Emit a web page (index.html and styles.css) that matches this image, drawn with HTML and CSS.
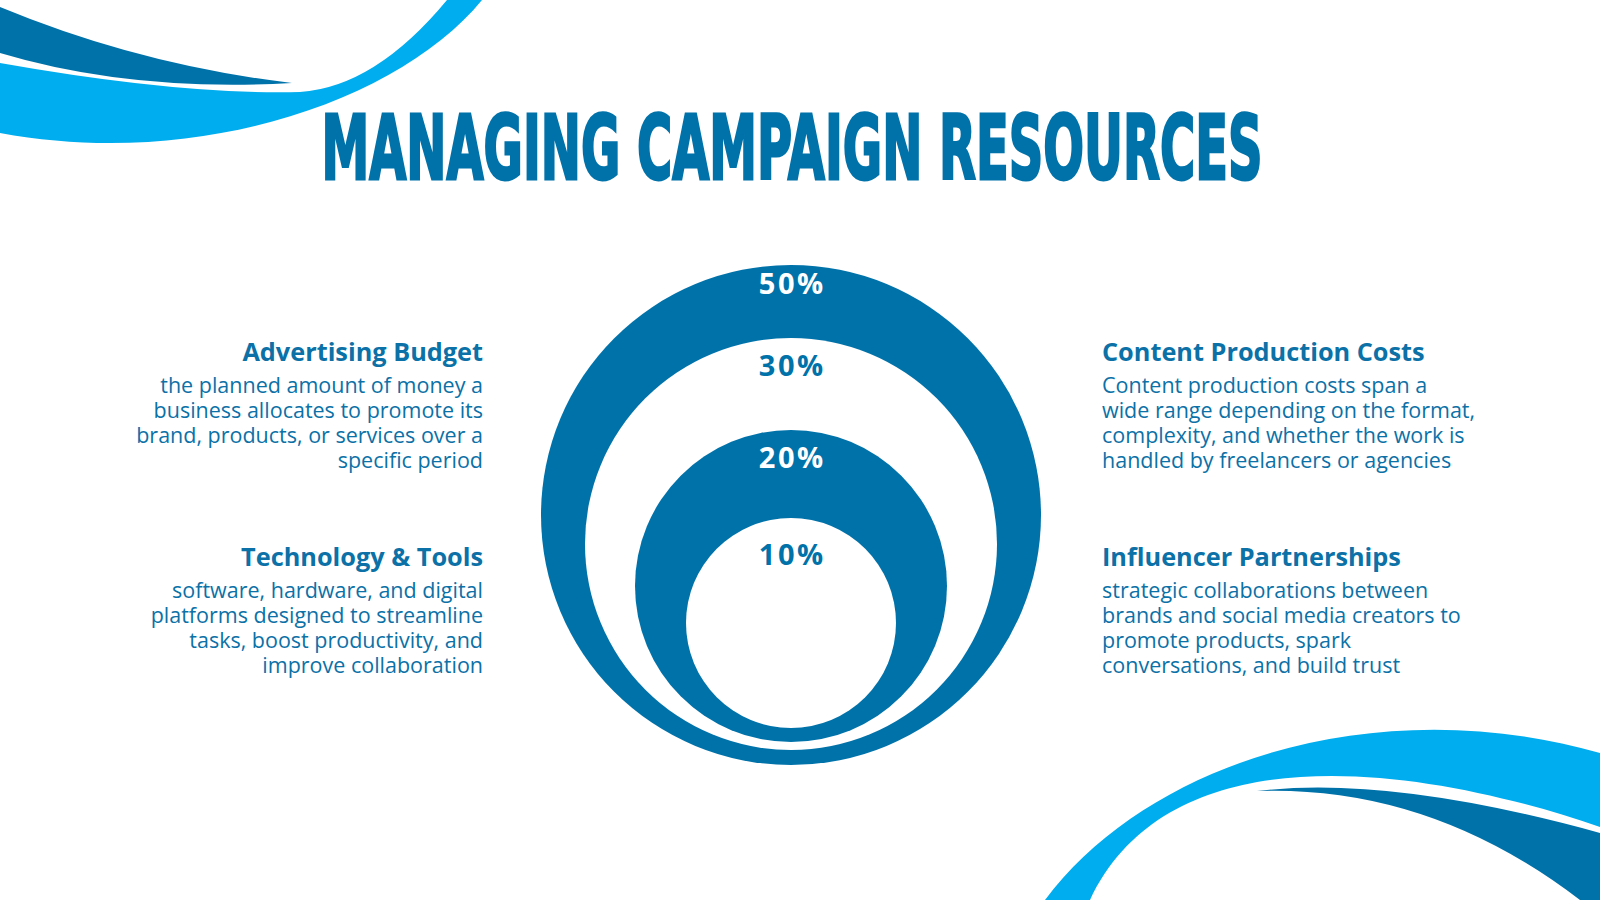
FILE: index.html
```html
<!DOCTYPE html>
<html lang="en">
<head>
<meta charset="utf-8">
<title>Managing Campaign Resources</title>
<link rel="stylesheet" href="styles.css">
</head>
<body>
<div class="slide">
  <svg class="decor" viewBox="0 0 1600 900" xmlns="http://www.w3.org/2000/svg" aria-hidden="true">
    <path class="swoosh-dark" d="M0,7 Q140,65 292,83 Q130,92 0,53 Z"/>
    <path class="swoosh-light" d="M0,63 Q180,95 300,92 Q375,87 447,0 L482,0 C400,100 200,170 0,133 Z"/>
    <path class="swoosh-light" d="M1045,900 C1150,760 1380,690 1600,753 L1600,827 C1420,765 1170,730 1090,900 Z"/>
    <path class="swoosh-dark" d="M1257,791 Q1390,775 1600,833 L1600,900 L1580,900 Q1430,785 1257,791 Z"/>
  </svg>

  <h1 class="title"><span>MANAGING CAMPAIGN RESOURCES</span></h1>

  <main class="content">
    <section class="col col-left">
      <div class="item">
        <h2>Advertising Budget</h2>
        <p>the planned amount of money a<br>business allocates to promote its<br>brand, products, or services over a<br>specific period</p>
      </div>
      <div class="item">
        <h2>Technology &amp; Tools</h2>
        <p>software, hardware, and digital<br>platforms designed to streamline<br>tasks, boost productivity, and<br>improve collaboration</p>
      </div>
    </section>

    <div class="chart">
      <div class="ring ring-1">
        <span class="pct pct-light">50%</span>
        <div class="ring ring-2">
          <span class="pct">30%</span>
          <div class="ring ring-3">
            <span class="pct pct-light">20%</span>
            <div class="ring ring-4">
              <span class="pct">10%</span>
            </div>
          </div>
        </div>
      </div>
    </div>

    <section class="col col-right">
      <div class="item">
        <h2>Content Production Costs</h2>
        <p>Content production costs span a<br>wide range depending on the format,<br>complexity, and whether the work is<br>handled by freelancers or agencies</p>
      </div>
      <div class="item">
        <h2>Influencer Partnerships</h2>
        <p>strategic collaborations between<br>brands and social media creators to<br>promote products, spark<br>conversations, and build trust</p>
      </div>
    </section>
  </main>
</div>
</body>
</html>
```

FILE: styles.css
```css
html, body {
  margin: 0;
  padding: 0;
  background: #ffffff;
}

.slide {
  position: relative;
  width: 1600px;
  height: 900px;
  overflow: hidden;
  background: #ffffff;
  font-family: "Open Sans", "Noto Sans", sans-serif;
  color: #0b71a7;
}

.decor {
  position: absolute;
  left: 0;
  top: 0;
  width: 1600px;
  height: 900px;
  z-index: 0;
}

.swoosh-dark { fill: #0072aa; }
.swoosh-light { fill: #00adee; }

.title,
.content {
  position: relative;
  z-index: 1;
}

.title {
  display: flex;
  justify-content: center;
  margin: 107.5px 0 0;
  padding-right: 17px;
  font-family: "DejaVu Sans", sans-serif;
  font-weight: 700;
  font-size: 89px;
  line-height: 80px;
  color: #0072aa;
}

.title span {
  display: inline-block;
  flex: none;
  white-space: nowrap;
  transform: scaleX(0.539);
  transform-origin: center;
  -webkit-text-stroke: 3px #0072aa;
}

.content {
  display: grid;
  grid-template-columns: 483px 500px 1fr;
  column-gap: 58px;
  align-items: start;
  margin-top: 77.5px;
}

.col {
  padding-top: 71px;
}

.col-left { text-align: right; }
.col-right { text-align: left; padding-left: 3px; }

.item + .item { margin-top: 69px; }

.item h2 {
  margin: 0 0 6px;
  font-size: 25.3px;
  line-height: 30px;
  font-weight: 700;
}

.item p {
  margin: 0;
  font-size: 21.5px;
  line-height: 25px;
  font-weight: 400;
}

.ring {
  box-sizing: border-box;
  border-radius: 50%;
  display: flex;
  flex-direction: column;
  align-items: center;
}

.ring > .ring { margin-top: auto; }

.ring-1 {
  width: 500px;
  height: 500px;
  padding: 3px 0 15px;
  background: #0072aa;
}

.ring-2 {
  width: 412px;
  height: 412px;
  padding: 12px 0 8px;
  background: #ffffff;
}

.ring-3 {
  width: 312px;
  height: 312px;
  padding: 12px 0 14px;
  background: #0072aa;
}

.ring-4 {
  width: 210px;
  height: 210px;
  padding: 21px 0 0;
  background: #ffffff;
}

.pct {
  display: block;
  padding-left: 2.5px;
  font-family: "Open Sans", "Noto Sans", sans-serif;
  font-weight: 700;
  font-size: 29px;
  line-height: 30px;
  letter-spacing: 2.5px;
  color: #0072aa;
}

.pct-light { color: #ffffff; }
```
